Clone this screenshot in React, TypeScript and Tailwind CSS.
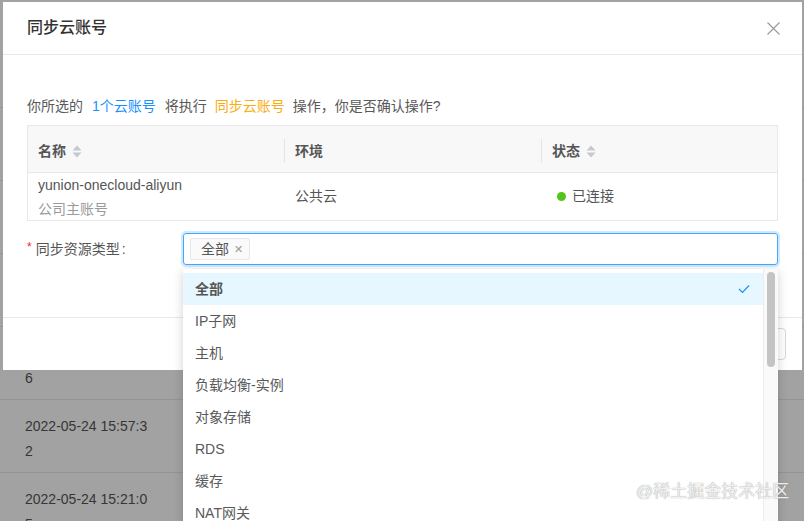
import React from "react";

const FONT = '"Liberation Sans", "Noto Sans CJK SC", sans-serif';

function SortIcon() {
  return (
    <svg width="10" height="13" viewBox="0 0 10 13" className="ml-[6px]">
      <path d="M5 0.5 L9.5 5.5 L0.5 5.5 Z" fill="#c4c8cf" />
      <path d="M5 12.5 L9.5 7.5 L0.5 7.5 Z" fill="#c4c8cf" />
    </svg>
  );
}

const bgRows = [
  ["2022-05-24 16:40:1", "8"],
  ["2022-05-24 16:31:0", "3"],
  ["2022-05-24 16:22:4", "1"],
  ["2022-05-24 16:10:5", "9"],
  ["2022-05-24 16:02:1", "6"],
  ["2022-05-24 15:57:3", "2"],
  ["2022-05-24 15:21:0", "5"],
];

const items = ["全部", "IP子网", "主机", "负载均衡-实例", "对象存储", "RDS", "缓存", "NAT网关", "NAS", "WAF"];

export default function App() {
  return (
    <div
      className="relative w-[804px] h-[521px] overflow-hidden bg-[#a2a2a2]"
      style={{ fontFamily: FONT }}
    >
      {/* background page */}
      <div className="flex flex-col pt-[35px]">
        {bgRows.map((r, i) => (
          <div
            key={i}
            className="h-[73px] shrink-0 border-b border-[#949494] pl-[25px] pt-[14px] text-[14px] leading-[25px] text-[#363636]"
          >
            <div>{r[0]}</div>
            <div>{r[1]}</div>
          </div>
        ))}
      </div>

      {/* modal */}
      <div className="absolute left-[3px] top-[2px] w-[799px] h-[368px] bg-white flex flex-col">
        <div className="h-[53px] shrink-0 border-b border-[#e8e8e8] pl-[24px] pr-[22px] flex items-center justify-between">
          <span className="text-[16px] text-[#333] font-medium">同步云账号</span>
          <svg width="13" height="13" viewBox="0 0 13 13">
            <path d="M0.5 0.5 L12.5 12.5 M12.5 0.5 L0.5 12.5" stroke="#9a9a9a" strokeWidth="1.2" />
          </svg>
        </div>
        <div className="flex-1 px-[24px] pt-[40px]">
          <div className="h-[22px] leading-[22px] text-[14px] text-[#595959] mb-[8px] flex">
            <span>你所选的</span>
            <span className="mx-[9px] text-[#1890ff]">1个云账号</span>
            <span>将执行</span>
            <span className="mx-[8px] text-[#faad14]">同步云账号</span>
            <span>操作，你是否确认操作?</span>
          </div>
          {/* table */}
          <div className="border border-[#e8e8e8] text-[14px]">
            <div className="h-[47px] pt-[4px] bg-[#f8f8f8] border-b border-[#e8e8e8] flex items-center font-semibold text-[#555]">
              <div className="w-[256px] px-[10px] flex items-center">
                名称
                <SortIcon />
              </div>
              <div className="w-[257px] px-[10px] border-l border-[#e4e4e4] h-[24px] flex items-center">环境</div>
              <div className="flex-1 px-[10px] border-l border-[#e4e4e4] h-[24px] flex items-center">
                状态
                <SortIcon />
              </div>
            </div>
            <div className="h-[47px] flex items-center text-[#555]">
              <div className="w-[256px] px-[10px] flex flex-col gap-[2px] leading-[22px]">
                <span>yunion-onecloud-aliyun</span>
                <span className="text-[#9a9a9a]">公司主账号</span>
              </div>
              <div className="w-[257px] px-[11px]">公共云</div>
              <div className="flex-1 px-[16px] flex items-center">
                <span className="w-[9px] h-[9px] rounded-full bg-[#52c41a] mr-[6px]" />
                已连接
              </div>
            </div>
          </div>
          {/* form row */}
          <div className="mt-[12px] flex items-center">
            <div className="w-[156px] shrink-0 flex items-center text-[14px] text-[#555]">
              <span className="text-[#f5222d] text-[12px] mr-[4px] -mt-[4px]">*</span>
              <span>同步资源类型</span>
              <span className="ml-[2px]">:</span>
            </div>
            <div className="flex-1 h-[32px] border border-[#40a9ff] rounded-[3px] shadow-[0_0_0_2px_rgba(24,144,255,0.2)] px-[6px] flex items-center">
              <div className="h-[22px] bg-[#fafafa] border border-[#e8e8e8] rounded-[2px] pl-[10px] pr-[6px] flex items-center text-[14px] text-[#555]">
                全部
                <span className="ml-[5px] text-[11px] text-[#999]">✕</span>
              </div>
            </div>
          </div>
        </div>
        <div className="h-[53px] shrink-0 border-t border-[#e8e8e8] px-[16px] flex items-center justify-end gap-[8px]">
          <div className="h-[32px] px-[15px] rounded-[4px] bg-[#1890ff] text-white text-[14px] flex items-center">确 定</div>
          <div className="h-[32px] px-[15px] rounded-[4px] border border-[#d9d9d9] text-[#595959] text-[14px] flex items-center">取 消</div>
        </div>
      </div>

      {/* dropdown */}
      <div className="absolute left-[183px] top-[269px] w-[595px] h-[260px] bg-white shadow-[0_2px_10px_rgba(0,0,0,0.18)] flex">
        <div className="flex-1 pt-[4px] overflow-hidden">
          {items.map((it, i) => (
            <div
              key={it}
              className={
                i === 0
                  ? "h-[32px] px-[12px] flex items-center justify-between bg-[#e6f7ff] text-[14px] font-semibold text-[#555]"
                  : "h-[32px] px-[12px] flex items-center text-[14px] text-[#595959]"
              }
            >
              <span>{it}</span>
              {i === 0 && (
                <svg width="12" height="10" viewBox="0 0 12 10" className="mr-[1px]">
                  <path d="M1 5 L4.5 8.5 L11 1.5" stroke="#1890ff" strokeWidth="1.2" fill="none" />
                </svg>
              )}
            </div>
          ))}
        </div>
        <div className="w-[15px] shrink-0 bg-[#fafafa] border-l border-[#ececec] pt-[3px] flex justify-center">
          <div className="w-[8px] h-[95px] rounded-full bg-[#c4c4c4]" />
        </div>
      </div>

      {/* watermark */}
      <div className="absolute left-[636px] top-[481px] text-[17px] leading-[22px] text-[rgba(255,255,255,0.9)] [text-shadow:0_0_1px_#777]">
        @稀土掘金技术社区
      </div>
    </div>
  );
}
